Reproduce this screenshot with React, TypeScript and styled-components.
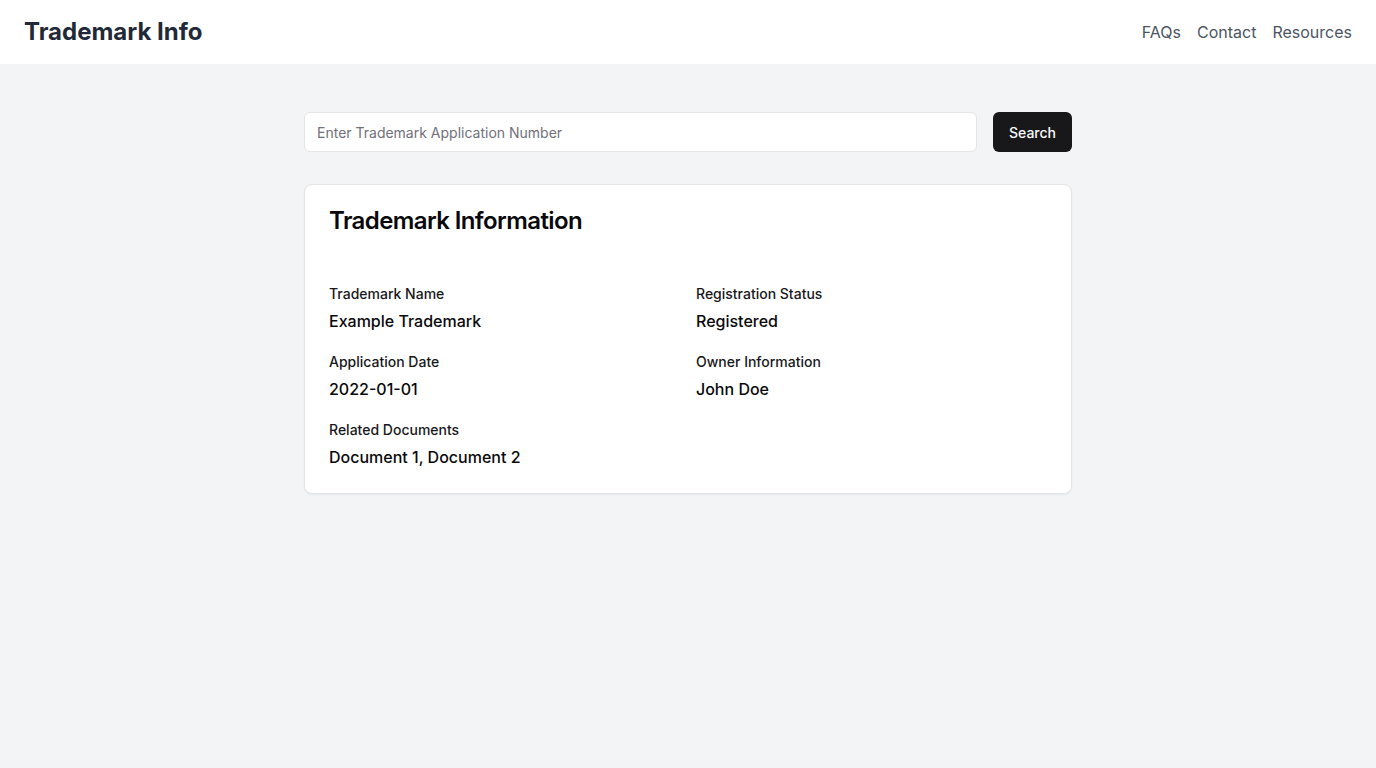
import React from "react";
import styled, { createGlobalStyle } from "styled-components";

const Global = createGlobalStyle`
  * { box-sizing: border-box; }
  body {
    margin: 0;
    font-family: Inter, "Noto Sans", sans-serif;
    background: #f3f4f6;
    color: #09090b;
  }
`;

const Page = styled.div`
  min-height: 100vh;
  background: #f3f4f6;
`;

const Header = styled.header`
  height: 64px;
  background: #ffffff;
  display: flex;
  align-items: center;
  justify-content: space-between;
  padding: 0 24px;
`;

const Brand = styled.h1`
  margin: 0;
  font-size: 24px;
  line-height: 32px;
  font-weight: 700;
  color: #1f2937;
`;

const Nav = styled.nav`
  display: flex;
  gap: 16px;
`;

const NavLink = styled.a`
  font-size: 16px;
  line-height: 24px;
  color: #4b5563;
  text-decoration: none;
`;

const Main = styled.main`
  max-width: 768px;
  margin: 0 auto;
  padding-top: 48px;
  display: flex;
  flex-direction: column;
  gap: 32px;
`;

const SearchRow = styled.div`
  display: flex;
  gap: 16px;
`;

const Input = styled.input`
  flex: 1;
  height: 40px;
  border: 1px solid #e4e4e7;
  border-radius: 6px;
  background: #ffffff;
  padding: 0 12px;
  font-family: inherit;
  font-size: 14px;
  color: #09090b;
  outline: none;
  &::placeholder { color: #71717a; }
`;

const Button = styled.button`
  height: 40px;
  padding: 0 16px;
  border: none;
  border-radius: 6px;
  background: #18181b;
  color: #fafafa;
  font-family: inherit;
  font-size: 14px;
  font-weight: 500;
  cursor: pointer;
`;

const Card = styled.section`
  background: #ffffff;
  border: 1px solid #e4e4e7;
  border-radius: 8px;
  box-shadow: 0 1px 2px rgba(0, 0, 0, 0.05);
`;

const CardHeader = styled.div`
  padding: 24px 24px 27px;
`;

const CardTitle = styled.h2`
  margin: 0;
  font-size: 24px;
  line-height: 24px;
  font-weight: 600;
  letter-spacing: -0.6px;
  color: #09090b;
`;

const CardContent = styled.div`
  padding: 24px 24px 22px;
  display: grid;
  grid-template-columns: 1fr 1fr;
  gap: 17px 16px;
`;

const Field = styled.div`
  display: flex;
  flex-direction: column;
  gap: 3px;
`;

const Label = styled.div`
  font-size: 14px;
  line-height: 20px;
  font-weight: 500;
  color: #18181b;
`;

const Value = styled.div`
  font-size: 16px;
  line-height: 28px;
  font-weight: 500;
  color: #09090b;
`;

const fields = [
  ["Trademark Name", "Example Trademark"],
  ["Registration Status", "Registered"],
  ["Application Date", "2022-01-01"],
  ["Owner Information", "John Doe"],
  ["Related Documents", "Document 1, Document 2"],
];

export default function App() {
  return (
    <Page>
      <Global />
      <Header>
        <Brand>Trademark Info</Brand>
        <Nav>
          <NavLink href="#">FAQs</NavLink>
          <NavLink href="#">Contact</NavLink>
          <NavLink href="#">Resources</NavLink>
        </Nav>
      </Header>
      <Main>
        <SearchRow>
          <Input placeholder="Enter Trademark Application Number" />
          <Button>Search</Button>
        </SearchRow>
        <Card>
          <CardHeader>
            <CardTitle>Trademark Information</CardTitle>
          </CardHeader>
          <CardContent>
            {fields.map(([l, v]) => (
              <Field key={l}>
                <Label>{l}</Label>
                <Value>{v}</Value>
              </Field>
            ))}
          </CardContent>
        </Card>
      </Main>
    </Page>
  );
}
